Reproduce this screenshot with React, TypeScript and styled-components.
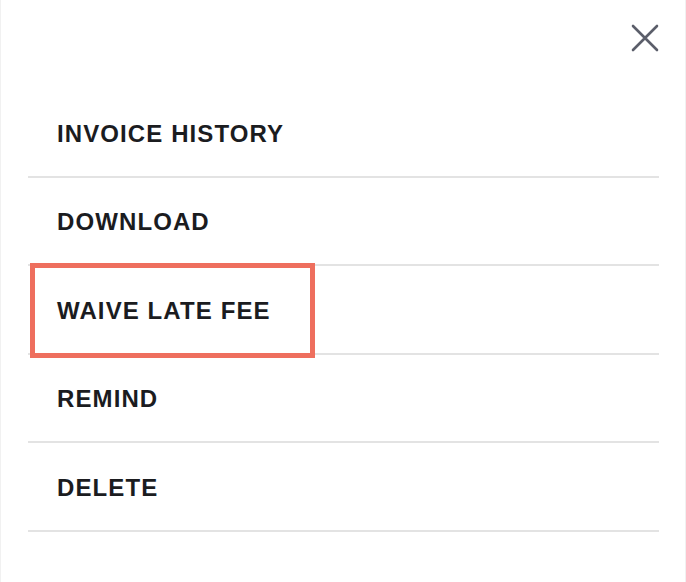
import styled, { createGlobalStyle } from "styled-components";

const GlobalStyle = createGlobalStyle`
  html, body {
    margin: 0;
    padding: 0;
    background: #ffffff;
  }
  body {
    font-family: "Liberation Sans", Arial, sans-serif;
  }
`;

const items = [
  { label: "INVOICE HISTORY" },
  { label: "DOWNLOAD" },
  { label: "WAIVE LATE FEE", highlighted: true },
  { label: "REMIND" },
  { label: "DELETE" },
];

const App = () => {
  return (
    <>
      <GlobalStyle />
      <Sheet>
        <Header>
          <CloseButton aria-label="Close">
            <svg width="28" height="28" viewBox="0 0 28 28">
              <path
                d="M2 2 L26 26 M26 2 L2 26"
                stroke="#5b5e6a"
                strokeWidth="2.6"
                strokeLinecap="round"
              />
            </svg>
          </CloseButton>
        </Header>
        <Menu>
          {items.map((item) => (
            <MenuItem key={item.label}>
              {item.label}
              {item.highlighted && <Highlight />}
            </MenuItem>
          ))}
        </Menu>
      </Sheet>
    </>
  );
};

export default App;

const Sheet = styled.div`
  width: 686px;
  height: 582px;
  box-sizing: border-box;
  border-left: 1px solid #f1f1f1;
  border-right: 1px solid #f1f1f1;
  background: #fff;
`;

const Header = styled.div`
  height: 89px;
  display: flex;
  justify-content: flex-end;
  align-items: flex-start;
  padding: 24px 26px 0 0;
  box-sizing: border-box;
`;

const CloseButton = styled.button`
  border: none;
  background: none;
  padding: 0;
  width: 28px;
  height: 28px;
  display: flex;
  cursor: pointer;
`;

const Menu = styled.ul`
  list-style: none;
  margin: 0 26px 0 27px;
  padding: 0;
`;

const MenuItem = styled.li`
  position: relative;
  height: 88.5px;
  box-sizing: border-box;
  display: flex;
  align-items: center;
  padding: 3px 0 0 29px;
  border-bottom: 2px solid #e3e3e3;
  font-size: 24px;
  font-weight: 700;
  letter-spacing: 1.1px;
  color: #1b1c1f;
`;

const Highlight = styled.span`
  position: absolute;
  left: 2px;
  top: -3px;
  width: 285px;
  height: 95px;
  box-sizing: border-box;
  border: 5px solid #ee6f5e;
  pointer-events: none;
`;
